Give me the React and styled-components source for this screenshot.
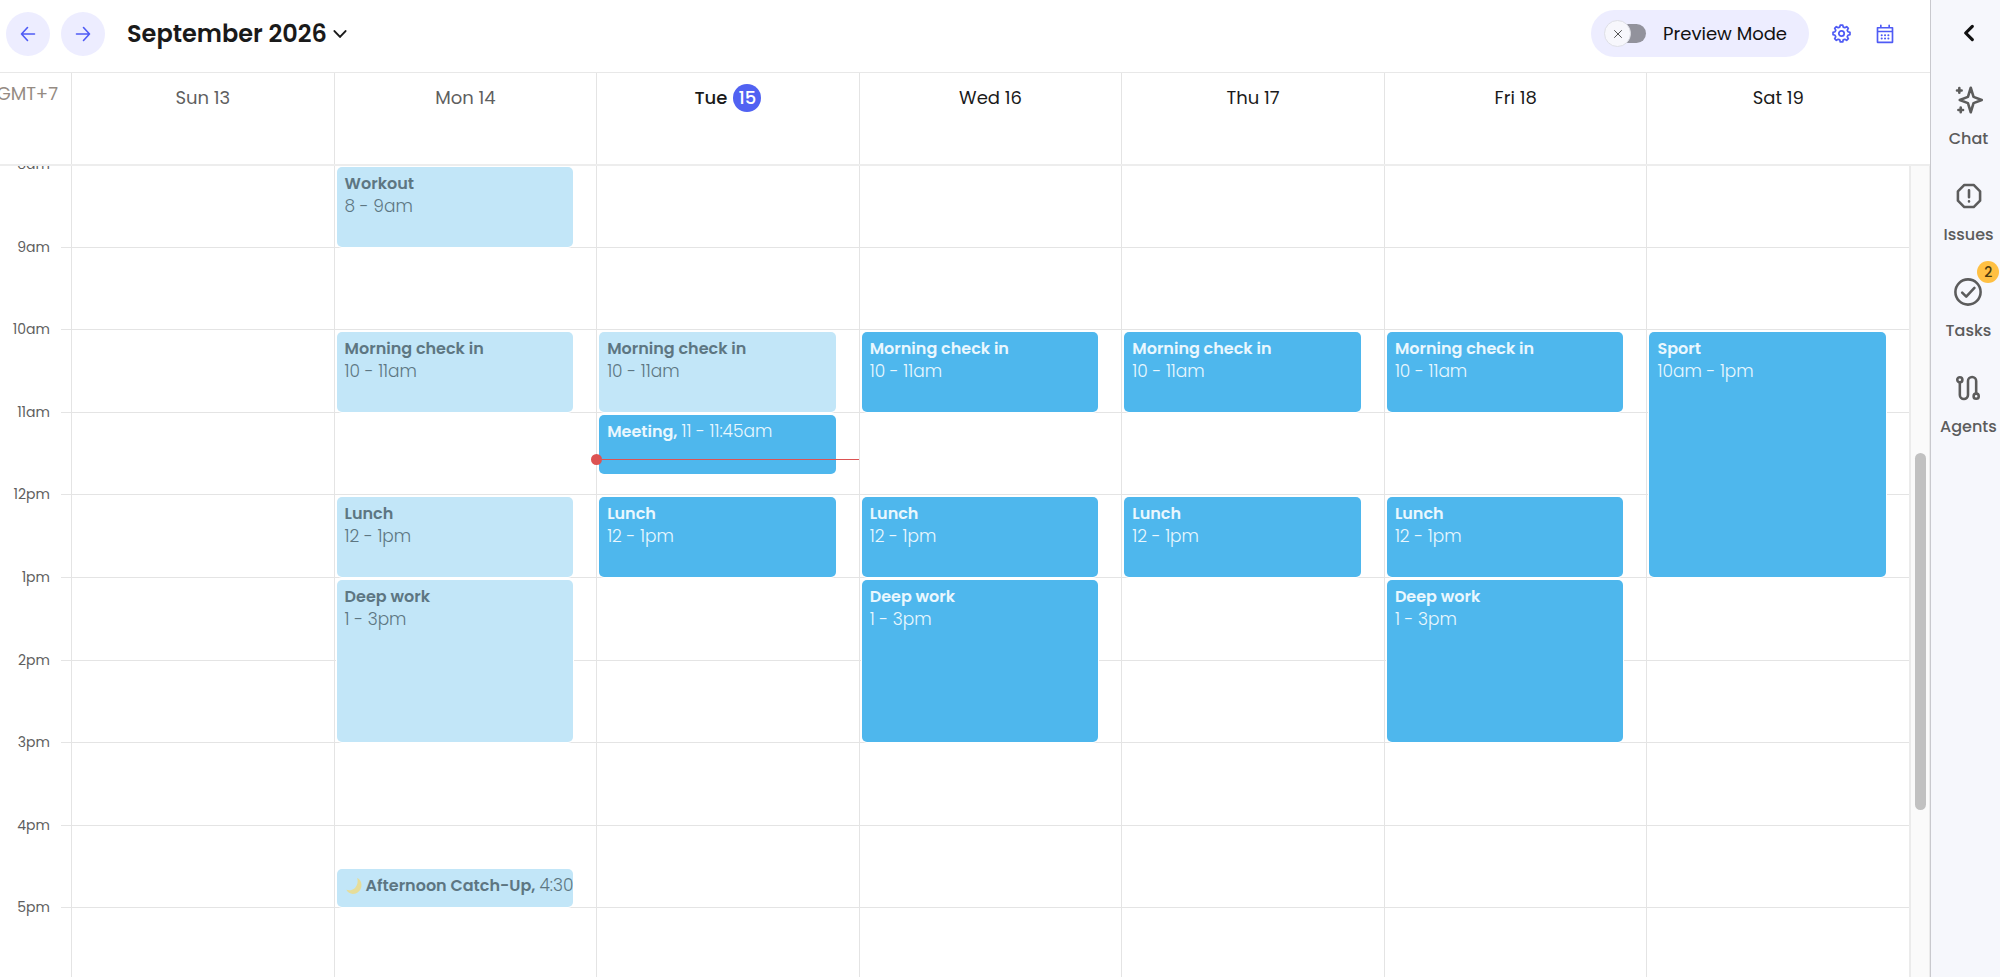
import React from "react";
import styled, { createGlobalStyle } from "styled-components";

const GlobalStyle = createGlobalStyle`
  * {
    box-sizing: border-box;
  }

  body {
    margin: 0;
    background: #fff;
    color: #1a1a1a;
    font-family: Poppins, Inter, "Liberation Sans", sans-serif;
  }

  button {
    padding: 0;
    border: 0;
    background: none;
    color: inherit;
    font: inherit;
    cursor: pointer;
  }
`;

// layout

const Page = styled.div`
  display: flex;
  height: 100vh;
  overflow: hidden;
`;

const Main = styled.main`
  display: flex;
  flex: 1;
  flex-direction: column;
  min-width: 0;
`;

// toolbar

const Toolbar = styled.header`
  display: flex;
  flex: none;
  align-items: center;
  justify-content: space-between;
  height: 72px;
  padding: 0 33px 5px 6px;
`;

const ToolbarGroup = styled.div`
  display: flex;
  align-items: center;
  gap: ${(props) => props.$gap}px;
`;

const RoundButton = styled.button`
  display: grid;
  place-items: center;
  width: 44px;
  height: 44px;
  border-radius: 50%;
  background: #ededff;
  color: #4f5bf5;
`;

const MonthButton = styled.button`
  display: flex;
  align-items: center;
  gap: 6px;
  margin-left: 11px;
  font-size: 24px;
  font-weight: 600;
  line-height: 36px;
`;

const PreviewToggle = styled.label`
  display: flex;
  align-items: center;
  gap: 16px;
  height: 47px;
  padding: 0 22px 0 13px;
  border-radius: 24px;
  background: #ededff;
  color: #111;
  font-size: 18px;
  cursor: pointer;
`;

const Switch = styled.span`
  display: grid;
  align-items: center;
  width: 43px;
  height: 27px;
`;

const SwitchInput = styled.input`
  grid-area: 1 / 1;
  width: 36px;
  height: 19px;
  margin: 0 0 0 6px;
  border-radius: 10px;
  background: #92929c;
  appearance: none;
`;

const SwitchThumb = styled.span`
  display: grid;
  grid-area: 1 / 1;
  place-items: center;
  width: 27px;
  height: 27px;
  border: 1px solid #dedfe6;
  border-radius: 50%;
  background: #f7f7fc;
  color: #555;
  pointer-events: none;
`;

const IconButton = styled.button`
  display: grid;
  place-items: center;
  width: 24px;
  height: 24px;
  color: #4f5bf5;
`;

// day headings

const DayHeader = styled.div`
  display: flex;
  flex: none;
  height: 94px;
  padding-right: 21px;
  border-top: 1px solid #e8e8e8;
  border-bottom: 2px solid #ededed;
`;

const TimeZone = styled.div`
  display: flex;
  flex: none;
  justify-content: flex-end;
  width: 71px;
  padding: 9px 13px 0 0;
  overflow: hidden;
  color: #958b83;
  font-size: 18px;
  line-height: 24px;
`;

const DayHeading = styled.div`
  display: flex;
  flex: 1;
  gap: 6px;
  justify-content: center;
  padding-top: 11px;
  border-left: 1px solid #e4e4e4;
  color: ${(props) => (props.$past ? "#5f5f5f" : "#1a1a1a")};
  font-size: 18px;
  font-weight: ${(props) => (props.$today ? 500 : 400)};
  line-height: 28px;
`;

const TodayNumber = styled.span`
  width: 28px;
  height: 28px;
  border-radius: 50%;
  background: #5162f2;
  color: #fff;
  font-weight: 500;
  text-align: center;
`;

// time grid

const Body = styled.div`
  display: flex;
  flex: 1;
  min-height: 0;
  overflow: hidden;
`;

const TimeGrid = styled.div`
  display: grid;
  flex: 1;
  grid-template-columns: 71px 1fr;
  height: 826px;
  margin-top: -2px;
`;

const HourRows = styled.div`
  display: grid;
  grid-area: 1 / 1 / 2 / 3;
  grid-template-rows: repeat(10, 1fr);
`;

const HourRow = styled.div`
  display: flex;
`;

const HourLabel = styled.span`
  width: 50px;
  height: 20px;
  margin-top: -10px;
  color: #5f5f5f;
  font-size: 14px;
  line-height: 20px;
  text-align: right;
`;

const HourLine = styled.span`
  flex: 1;
  height: 1px;
  margin-left: 11px;
  background: #e4e4e4;
`;

const Days = styled.div`
  display: flex;
  grid-area: 1 / 2;
  z-index: 1;
`;

const Day = styled.div`
  position: relative;
  display: grid;
  flex: 1;
  grid-template-rows: repeat(40, 1fr);
  min-width: 0;
  padding: 0 23px 0 2px;
  border-left: 1px solid #e4e4e4;
`;

const Event = styled.button`
  grid-row: ${(props) => props.$row} / span ${(props) => props.$span};
  grid-column: 1;
  display: flex;
  flex-direction: ${(props) => (props.$inline ? "row" : "column")};
  gap: ${(props) => (props.$inline ? 4 : 0)}px;
  align-items: flex-start;
  min-width: 0;
  margin-top: 3px;
  padding: 5px 0 0 8px;
  overflow: hidden;
  border-radius: 5px;
  background: ${(props) => (props.$past ? "#c2e6f8" : "#4eb7ed")};
  box-shadow: 0 0 0 1px #fff;
  color: ${(props) => (props.$past ? "#5d7682" : "#eaf7fe")};
  font-size: 17px;
  line-height: 23px;
  white-space: nowrap;
`;

const EventTitle = styled.span`
  display: flex;
  gap: 3px;
  align-items: center;
  font-size: 16px;
  font-weight: 600;
`;

const EventTime = styled.span`
  font-weight: 300;
`;

const NowLine = styled.div`
  position: absolute;
  right: 0;
  left: 0;
  height: 1px;
  background: #dc5353;

  &::before {
    position: absolute;
    top: -5px;
    left: -6px;
    width: 11px;
    height: 11px;
    border-radius: 50%;
    background: #dc5353;
    content: "";
  }
`;

const ScrollTrack = styled.div`
  flex: none;
  width: 21px;
  padding: 287px 4px 0 4px;
  border-left: 2px solid #ebebeb;
  border-right: 1px solid #ebebeb;
  background: #fafafa;
`;

const ScrollThumb = styled.div`
  width: 11px;
  height: 357px;
  border-radius: 6px;
  background: #c1c1c1;
`;

// side panel

const Sidebar = styled.nav`
  display: flex;
  flex: none;
  flex-direction: column;
  align-items: center;
  width: 70px;
  padding-left: 6px;
  border-left: 1px solid #c9c9ce;
  background: #f6f7fc;
  color: #5c5c5c;
`;

const CollapseButton = styled.button`
  display: grid;
  place-items: center;
  width: 32px;
  height: 32px;
  margin: 17px 0 32px;
  color: #111;
`;

const SidebarItem = styled.button`
  position: relative;
  display: flex;
  flex-direction: column;
  gap: 12px;
  align-items: center;
  height: 96px;
  padding-top: 5px;
  font-size: 16px;
  font-weight: 500;
  line-height: 26px;
`;

const Badge = styled.span`
  position: absolute;
  top: -12px;
  right: -8px;
  width: 22px;
  height: 22px;
  border-radius: 50%;
  background: #ffc043;
  color: #4a3a10;
  font-size: 14px;
  line-height: 22px;
  text-align: center;
`;

// icons

const Stroke = ({ size, width = 2.2, children }) => (
  <svg
    width={size}
    height={size}
    viewBox="0 0 24 24"
    fill="none"
    stroke="currentColor"
    strokeWidth={width}
    strokeLinecap="round"
    strokeLinejoin="round"
    aria-hidden="true"
  >
    {children}
  </svg>
);

const ArrowLeftIcon = () => (
  <Stroke size={24} width={1.6}>
    <path d="M18.5 12h-13M11.5 5.5 5.5 12l6 6.5" />
  </Stroke>
);

const ArrowRightIcon = () => (
  <Stroke size={24} width={1.6}>
    <path d="M5.5 12h13M12.5 5.5l6 6.5-6 6.5" />
  </Stroke>
);

const ChevronDownIcon = () => (
  <Stroke size={14} width={3.4}>
    <path d="M2.5 7 12 17l9.5-10" />
  </Stroke>
);

const ChevronLeftIcon = () => (
  <Stroke size={20} width={3.8}>
    <path d="M16 4 8 12l8 8" />
  </Stroke>
);

const CrossIcon = () => (
  <Stroke size={12} width={2}>
    <path d="M5 5l14 14M19 5 5 19" />
  </Stroke>
);

// eight teeth, each with two outer and two inner corners
const gearPoints = Array.from({ length: 8 }, (_, tooth) =>
  [
    [-15, 8.4],
    [-8, 10.8],
    [8, 10.8],
    [15, 8.4],
  ].map(([offset, radius]) => {
    const angle = ((tooth * 45 + offset) * Math.PI) / 180;
    return `${12 + radius * Math.sin(angle)},${12 - radius * Math.cos(angle)}`;
  })
)
  .flat()
  .join(" ");

const GearIcon = () => (
  <Stroke size={19}>
    <circle cx="12" cy="12" r="3.4" />
    <polygon points={gearPoints} />
  </Stroke>
);

const CalendarIcon = () => (
  <Stroke size={20} width={2}>
    <path d="M3 4.5h18v17.5H3zM3 9h18M7 1.5v3M17 1.5v3" />
    <path d="M8 13.5h.1M12 13.5h.1M16 13.5h.1M8 17.5h.1M12 17.5h.1M16 17.5h.1" strokeWidth="2.4" />
  </Stroke>
);

const ChatIcon = () => (
  <Stroke size={28}>
    <path d="M13.5 1.5l2.4 7.8 7 2.7-7 2.7-2.4 7.8-2.4-7.8-7-2.7 7-2.7z" />
    <path d="M3.7 1.8v4M1.7 3.8h4M4.9 18.5v4M2.9 20.5h4" />
  </Stroke>
);

const IssuesIcon = () => (
  <Stroke size={28}>
    <path d="M8 2.5h8L21.5 8v8L16 21.5H8L2.5 16V8zM12 7v6M12 16.5v.2" />
  </Stroke>
);

const TasksIcon = () => (
  <Stroke size={28}>
    <circle cx="12" cy="12" r="10.8" />
    <path d="M7 12.5l3.5 3.5 7-7.5" />
  </Stroke>
);

const AgentsIcon = () => (
  <Stroke size={28}>
    <circle cx="5" cy="5" r="2.2" />
    <circle cx="19" cy="19" r="2.2" />
    <path d="M5 7.5V18a3.5 3.5 0 0 0 7 0V6a3.5 3.5 0 0 1 7 0v10.5" />
  </Stroke>
);

const MoonIcon = () => (
  <svg width="18" height="18" viewBox="0 0 17 17" aria-hidden="true">
    <path
      d="M11.5 1c2.8 1.300 4.500 4.200 4 7.700-.7 4.300-4 7.300-8 7.300-2.700 0-5-1.500-6.200-3.900 3.200.9 6.500.1 8.500-2.300 2.100-2.500 2.700-5.500 1.700-8.800z"
      fill="#e6dd9a"
    />
  </svg>
);

// data

const HOURS = ["8am", "9am", "10am", "11am", "12pm", "1pm", "2pm", "3pm", "4pm", "5pm"];
const FIRST_HOUR = 8;
const NOW = 11.57;

const checkIn = { title: "Morning check in", time: "10 - 11am", start: 10, end: 11 };
const lunch = { title: "Lunch", time: "12 - 1pm", start: 12, end: 13 };
const deepWork = { title: "Deep work", time: "1 - 3pm", start: 13, end: 15 };

const DAYS = [
  { name: "Sun", number: 13, past: true, events: [] },
  {
    name: "Mon",
    number: 14,
    past: true,
    events: [
      { title: "Workout", time: "8 - 9am", start: 8, end: 9 },
      checkIn,
      lunch,
      deepWork,
      { title: "Afternoon Catch-Up,", time: "4:30 - 5pm", start: 16.5, end: 17, inline: true, moon: true },
    ],
  },
  {
    name: "Tue",
    number: 15,
    today: true,
    events: [
      checkIn,
      { title: "Meeting,", time: "11 - 11:45am", start: 11, end: 11.75, inline: true },
      lunch,
    ],
  },
  { name: "Wed", number: 16, events: [checkIn, lunch, deepWork] },
  { name: "Thu", number: 17, events: [checkIn, lunch] },
  { name: "Fri", number: 18, events: [checkIn, lunch, deepWork] },
  {
    name: "Sat",
    number: 19,
    events: [{ title: "Sport", time: "10am - 1pm", start: 10, end: 13 }],
  },
];

const SIDEBAR_ITEMS = [
  { label: "Chat", Icon: ChatIcon },
  { label: "Issues", Icon: IssuesIcon },
  { label: "Tasks", Icon: TasksIcon, badge: 2 },
  { label: "Agents", Icon: AgentsIcon },
];

const DayColumn = ({ day }) => (
  <Day>
    {day.events.map((event) => (
      <Event
        key={event.title}
        $row={(event.start - FIRST_HOUR) * 4 + 1}
        $span={(event.end - event.start) * 4}
        $past={day.past || (day.today && event.end < NOW)}
        $inline={event.inline}
      >
        <EventTitle>
          {event.moon && <MoonIcon />}
          {event.title}
        </EventTitle>
        <EventTime>{event.time}</EventTime>
      </Event>
    ))}
    {day.today && <NowLine style={{ top: `${(NOW - FIRST_HOUR) * 10}%` }} />}
  </Day>
);

export default function App() {
  return (
    <Page>
      <GlobalStyle />
      <Main>
        <Toolbar>
          <ToolbarGroup $gap={11}>
            <RoundButton aria-label="Previous week">
              <ArrowLeftIcon />
            </RoundButton>
            <RoundButton aria-label="Next week">
              <ArrowRightIcon />
            </RoundButton>
            <MonthButton>
              September 2026
              <ChevronDownIcon />
            </MonthButton>
          </ToolbarGroup>
          <ToolbarGroup $gap={20}>
            <PreviewToggle>
              <Switch>
                <SwitchInput type="checkbox" role="switch" />
                <SwitchThumb>
                  <CrossIcon />
                </SwitchThumb>
              </Switch>
              Preview Mode
            </PreviewToggle>
            <IconButton aria-label="Settings">
              <GearIcon />
            </IconButton>
            <IconButton aria-label="Calendar">
              <CalendarIcon />
            </IconButton>
          </ToolbarGroup>
        </Toolbar>
        <DayHeader>
          <TimeZone>GMT+7</TimeZone>
          {DAYS.map((day) => (
            <DayHeading key={day.name} $past={day.past} $today={day.today}>
              {day.today ? (
                <>
                  {day.name}
                  <TodayNumber>{day.number}</TodayNumber>
                </>
              ) : (
                `${day.name} ${day.number}`
              )}
            </DayHeading>
          ))}
        </DayHeader>
        <Body>
          <TimeGrid>
            <HourRows>
              {HOURS.map((hour) => (
                <HourRow key={hour}>
                  <HourLabel>{hour}</HourLabel>
                  <HourLine />
                </HourRow>
              ))}
            </HourRows>
            <Days>
              {DAYS.map((day) => (
                <DayColumn key={day.name} day={day} />
              ))}
            </Days>
          </TimeGrid>
          <ScrollTrack>
            <ScrollThumb />
          </ScrollTrack>
        </Body>
      </Main>
      <Sidebar>
        <CollapseButton aria-label="Expand panel">
          <ChevronLeftIcon />
        </CollapseButton>
        {SIDEBAR_ITEMS.map(({ label, Icon, badge }) => (
          <SidebarItem key={label}>
            <Icon />
            {label}
            {badge && <Badge>{badge}</Badge>}
          </SidebarItem>
        ))}
      </Sidebar>
    </Page>
  );
}
